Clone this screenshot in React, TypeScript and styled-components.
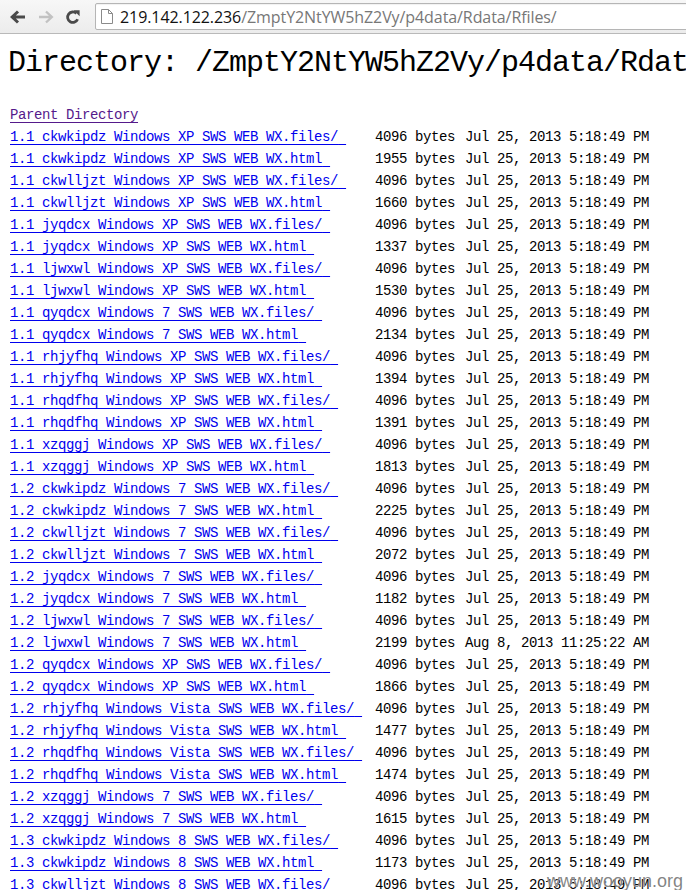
import React from "react";
import styled, { createGlobalStyle } from "styled-components";

const Global = createGlobalStyle`
  html, body { margin: 0; padding: 0; overflow: hidden; background: #fff; }
  body { font-family: "Liberation Mono", monospace; }
`;

const Window = styled.div`
  position: relative;
  width: 686px;
  height: 890px;
  overflow: hidden;
  background: #fff;
`;

const Toolbar = styled.div`
  display: flex;
  align-items: center;
  height: 33px;
  padding-left: 9px;
  background: linear-gradient(#f7f7f7, #ececec);
  border-bottom: 1px solid #b9b9b9;
  box-sizing: content-box;
`;

const NavButton = styled.div`
  width: 28px;
  height: 33px;
  display: flex;
  align-items: center;
  justify-content: flex-start;
`;

const AddressBox = styled.div`
  margin-left: 2px;
  flex: 1;
  height: 25px;
  margin-right: -6px;
  display: flex;
  align-items: center;
  background: #fff;
  border: 1px solid #b5b5b5;
  border-radius: 2px;
  padding-left: 5px;
  gap: 7px;
  box-shadow: inset 0 1px 1px rgba(0,0,0,0.06);
`;

const Url = styled.span`
  font-family: "Open Sans", "Noto Sans", sans-serif;
  font-size: 16px;
  letter-spacing: -0.08px;
  color: #777;
  white-space: nowrap;
`;

const Host = styled.span`
  color: #111;
`;

const Content = styled.div`
  padding-left: 8px;
`;

const Heading = styled.h1`
  margin: 9px 0 21px 0;
  height: 40px;
  line-height: 40px;
  font-family: "Liberation Mono", monospace;
  font-weight: normal;
  font-size: 30px;
  letter-spacing: -1px;
  color: #000;
  white-space: nowrap;
`;

const Listing = styled.div`
  display: grid;
  grid-template-columns: 365px 90px auto;
  grid-auto-rows: 22px;
  align-items: center;
  padding-left: 2px;
  margin-top: 2px;
  font-family: "Liberation Mono", monospace;
  font-size: 14px;
  letter-spacing: -0.4px;
  white-space: nowrap;
  color: #000;
`;

const FileLink = styled.a<{ $visited?: boolean }>`
  color: ${(p) => (p.$visited ? "#551A8B" : "#0000EE")};
  text-decoration: underline;
  text-underline-offset: 3px;
  text-decoration-thickness: 1px;
`;

const NameCell = styled.div<{ $span?: boolean }>`
  grid-column: ${(p) => (p.$span ? "1 / -1" : "auto")};
`;

const Cell = styled.div``;

const Watermark = styled.div`
  position: absolute;
  right: 3px;
  bottom: -2px;
  font-family: "Liberation Sans", Arial, sans-serif;
  font-size: 18px;
  color: rgba(110, 110, 110, 0.85);
  text-shadow: 0 0 1px #fff;
`;

const J = "Jul 25, 2013 5:18:49 PM";

const rows: [string, string, string][] = [
  ["1.1 ckwkipdz Windows XP SWS WEB WX.files/", "4096", J],
  ["1.1 ckwkipdz Windows XP SWS WEB WX.html", "1955", J],
  ["1.1 ckwlljzt Windows XP SWS WEB WX.files/", "4096", J],
  ["1.1 ckwlljzt Windows XP SWS WEB WX.html", "1660", J],
  ["1.1 jyqdcx Windows XP SWS WEB WX.files/", "4096", J],
  ["1.1 jyqdcx Windows XP SWS WEB WX.html", "1337", J],
  ["1.1 ljwxwl Windows XP SWS WEB WX.files/", "4096", J],
  ["1.1 ljwxwl Windows XP SWS WEB WX.html", "1530", J],
  ["1.1 qyqdcx Windows 7 SWS WEB WX.files/", "4096", J],
  ["1.1 qyqdcx Windows 7 SWS WEB WX.html", "2134", J],
  ["1.1 rhjyfhq Windows XP SWS WEB WX.files/", "4096", J],
  ["1.1 rhjyfhq Windows XP SWS WEB WX.html", "1394", J],
  ["1.1 rhqdfhq Windows XP SWS WEB WX.files/", "4096", J],
  ["1.1 rhqdfhq Windows XP SWS WEB WX.html", "1391", J],
  ["1.1 xzqggj Windows XP SWS WEB WX.files/", "4096", J],
  ["1.1 xzqggj Windows XP SWS WEB WX.html", "1813", J],
  ["1.2 ckwkipdz Windows 7 SWS WEB WX.files/", "4096", J],
  ["1.2 ckwkipdz Windows 7 SWS WEB WX.html", "2225", J],
  ["1.2 ckwlljzt Windows 7 SWS WEB WX.files/", "4096", J],
  ["1.2 ckwlljzt Windows 7 SWS WEB WX.html", "2072", J],
  ["1.2 jyqdcx Windows 7 SWS WEB WX.files/", "4096", J],
  ["1.2 jyqdcx Windows 7 SWS WEB WX.html", "1182", J],
  ["1.2 ljwxwl Windows 7 SWS WEB WX.files/", "4096", J],
  ["1.2 ljwxwl Windows 7 SWS WEB WX.html", "2199", "Aug 8, 2013 11:25:22 AM"],
  ["1.2 qyqdcx Windows XP SWS WEB WX.files/", "4096", J],
  ["1.2 qyqdcx Windows XP SWS WEB WX.html", "1866", J],
  ["1.2 rhjyfhq Windows Vista SWS WEB WX.files/", "4096", J],
  ["1.2 rhjyfhq Windows Vista SWS WEB WX.html", "1477", J],
  ["1.2 rhqdfhq Windows Vista SWS WEB WX.files/", "4096", J],
  ["1.2 rhqdfhq Windows Vista SWS WEB WX.html", "1474", J],
  ["1.2 xzqggj Windows 7 SWS WEB WX.files/", "4096", J],
  ["1.2 xzqggj Windows 7 SWS WEB WX.html", "1615", J],
  ["1.3 ckwkipdz Windows 8 SWS WEB WX.files/", "4096", J],
  ["1.3 ckwkipdz Windows 8 SWS WEB WX.html", "1173", J],
  ["1.3 ckwlljzt Windows 8 SWS WEB WX.files/", "4096", J],
];

const BackIcon = () => (
  <svg width="18" height="16" viewBox="0 0 18 16">
    <path d="M16 8H4M9 2.5L3.2 8 9 13.5" fill="none" stroke="#4a4a4a" strokeWidth="3" />
  </svg>
);

const ForwardIcon = () => (
  <svg width="18" height="16" viewBox="0 0 18 16">
    <path d="M2 8h12M9 2.5L14.8 8 9 13.5" fill="none" stroke="#c2c2c2" strokeWidth="2.4" />
  </svg>
);

const ReloadIcon = () => (
  <svg width="16" height="16" viewBox="0 0 16 16">
    <path d="M12.6 10.2A5.2 5.2 0 1 1 11.4 4.4" fill="none" stroke="#4a4a4a" strokeWidth="2.8" />
    <path d="M8.6 1.2H14.6V7.2Z" fill="#4a4a4a" />
  </svg>
);

const PageIcon = () => (
  <svg width="12" height="15" viewBox="0 0 12 15">
    <path d="M0.5 0.5H7.5L11.5 4.5V14.5H0.5Z" fill="#fff" stroke="#8a8a8a" />
    <path d="M7.5 0.5V4.5H11.5" fill="none" stroke="#8a8a8a" />
  </svg>
);

export default function App() {
  return (
    <Window>
      <Global />
      <Toolbar>
        <NavButton><BackIcon /></NavButton>
        <NavButton><ForwardIcon /></NavButton>
        <NavButton><ReloadIcon /></NavButton>
        <AddressBox>
          <PageIcon />
          <Url>
            <Host>219.142.122.236</Host>/ZmptY2NtYW5hZ2Vy/p4data/Rdata/Rfiles/
          </Url>
        </AddressBox>
      </Toolbar>
      <Content>
        <Heading>Directory: /ZmptY2NtYW5hZ2Vy/p4data/Rdata/Rfiles/</Heading>
        <Listing>
          <NameCell $span>
            <FileLink href="#" $visited>Parent Directory</FileLink>
          </NameCell>
          {rows.map(([name, size, date], i) => (
            <React.Fragment key={i}>
              <NameCell>
                <FileLink href="#">{name}{"\u00a0"}</FileLink>
              </NameCell>
              <Cell>{size} bytes</Cell>
              <Cell>{date}</Cell>
            </React.Fragment>
          ))}
        </Listing>
      </Content>
      <Watermark>www.wooyun.org</Watermark>
    </Window>
  );
}
